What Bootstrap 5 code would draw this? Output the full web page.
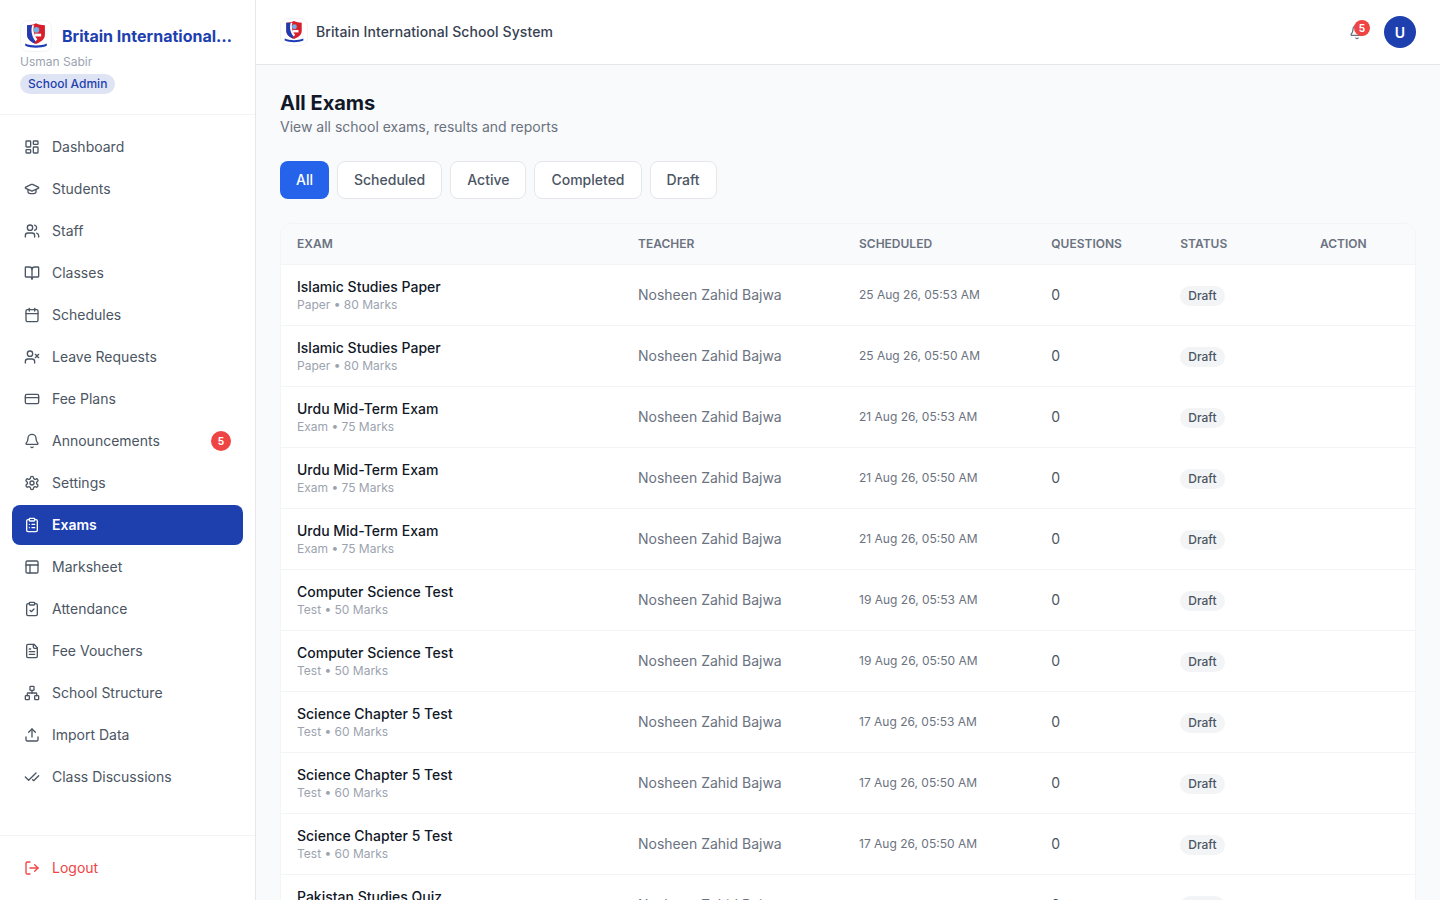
<!DOCTYPE html>
<html lang="en">
<head>
    <meta charset="UTF-8">
    <meta name="viewport" content="width=device-width, initial-scale=1.0">
    <title>All Exams</title>
    <link href="https://cdn.jsdelivr.net/npm/bootstrap@5.3.0/dist/css/bootstrap.min.css" rel="stylesheet">
    <style>
        html, body { height: 100%; }
        body { font-family: Inter, "Liberation Sans", sans-serif; background: #f9fafb; color: #111827; overflow: hidden; }
        .shell { height: 100vh; }
        .side { width: 256px; flex: 0 0 256px; background: #fff; border-right: 1px solid #e5e7eb; }
        .side-head { height: 115px; padding: 20px 20px 0; border-bottom: 1px solid #f3f4f6; }
        .logo-box { width: 32px; height: 32px; flex: 0 0 32px; border: 1px solid #f3f4f6; border-radius: 8px; background: #fff; }
        .logo-box svg { width: 100%; height: 100%; display: block; }
        .brand-name { font-size: 16px; font-weight: 700; color: #1e40af; line-height: 32px; min-width: 0; width: 171px; margin-left: 10px; }
        .user-name { font-size: 12px; line-height: 16px; color: #9ca3af; margin-top: 2px; }
        .role-chip { font-size: 12px; line-height: 16px; font-weight: 500; color: #1e40af; background: #dfe4f4; border-radius: 999px; padding: 2px 8px; margin-top: 4px; }
        .side-links { padding: 12px; gap: 2px; flex: 1 1 auto; }
        .side-link { height: 40px; padding: 0 12px; gap: 12px; border-radius: 8px; font-size: 14px; line-height: 20px; color: #4b5563; text-decoration: none; }
        .side-link svg, .side-out svg { width: 16px; height: 16px; flex: 0 0 16px; }
        .side-link.on { background: #1e40af; color: #fff; font-weight: 600; }
        .count-dot { width: 20px; height: 20px; margin-left: auto; background: #ef4444; color: #fff; border-radius: 50%; font-size: 10px; font-weight: 700; }
        .side-foot { height: 65px; flex: 0 0 65px; padding: 12px 12px 0; border-top: 1px solid #f3f4f6; }
        .side-out { height: 40px; padding: 0 12px; gap: 12px; font-size: 14px; line-height: 20px; color: #ef4444; text-decoration: none; }
        .top-bar { height: 65px; flex: 0 0 65px; background: #fff; border-bottom: 1px solid #e5e7eb; padding: 0 24px; }
        .top-logo { width: 28px; height: 28px; flex: 0 0 28px; border: 1px solid #f3f4f6; border-radius: 8px; background: #fff; }
        .top-logo svg { width: 100%; height: 100%; display: block; }
        .top-name { font-size: 14px; line-height: 20px; font-weight: 500; letter-spacing: .09px; color: #374151; }
        .bell-wrap { width: 16px; height: 16px; color: #6b7280; margin-right: 19px; }
        .bell-wrap svg { width: 16px; height: 16px; display: block; }
        .bell-count { position: absolute; top: -4px; right: -5px; width: 16px; height: 16px; border-radius: 50%; background: #ef4444; color: #fff; font-size: 10px; font-weight: 700; }
        .avatar-dot { width: 32px; height: 32px; background: #1e40af; color: #fff; border-radius: 50%; font-size: 14px; font-weight: 600; }
        .page-wrap { padding: 24px 24px 0; overflow: hidden; }
        .page-title { font-size: 20px; line-height: 28px; font-weight: 700; color: #111827; margin: 0; }
        .page-sub { font-size: 14px; line-height: 20px; color: #6b7280; margin: 0 0 24px; }
        .tab-btn { height: 38px; padding: 0 16px; font-size: 14px; line-height: 20px; font-weight: 500; color: #4b5563; background: #fff; border: 1px solid #e5e7eb; border-radius: 8px; }
        .tab-btn.on { background: #2563eb; border: 0; color: #fff; }
        .tab-row { margin-bottom: 24px; gap: 8px; }
        .exam-card { background: #fff; border: 1px solid #f3f4f6; border-radius: 12px; overflow: hidden; }
        .exam-table { table-layout: fixed; width: 1134px; margin: 0; }
        .exam-table th { height: 40px; padding: 0 16px; background: #f9fafb; font-size: 12px; line-height: 16px; font-weight: 600; color: #6b7280; text-transform: uppercase; border-bottom: 1px solid #f3f4f6; vertical-align: middle; }
        .exam-table td { height: 61px; padding: 0 16px; border-bottom: 1px solid #f3f4f6; vertical-align: middle; font-size: 14px; line-height: 20px; color: #4b5563; }
        .exam-table td.td-status { line-height: 21px; }
        .exam-name { font-size: 14px; line-height: 20px; font-weight: 450; color: #111827; }
        .exam-meta { font-size: 12px; line-height: 16px; color: #9ca3af; }
        .td-teacher { color: #6b7280 !important; }
        .td-date { font-size: 12px !important; color: #6b7280 !important; }
        .draft-chip { display: inline-block; font-size: 12px; line-height: 16px; font-weight: 500; padding: 2px 8px; border-radius: 999px; background: #f3f4f6; color: #4b5563; }
    </style>
</head>
<body>
<svg width="0" height="0" class="position-absolute">
    <symbol id="schoolLogo" viewBox="0 0 32 32">
        <path d="M6.500 4.500C10 4.500 13 4 16 2.500c3 1.500 6 2 9.500 2v10c0 5-4 8-9.500 10-5.500-2-9.500-5-9.500-10z" fill="#d81e2a"/>
        <path d="M6.500 4.500h5.500c-1.500 4.500-1 10.500 3.500 16l-1 3.500C10 22 6.500 19 6.500 14.500z" fill="#1e3cb4"/>
        <path d="M12 4.500h2c-1.500 4.500-.5 10.500 3.500 15l-2 2c-4.500-5.500-5-12-3.500-17z" fill="#fff"/>
        <circle cx="16.500" cy="9.500" r="3" fill="#6fb1e6"/>
        <rect x="14.500" y="13.500" width="7" height="3" fill="#fff"/>
        <path d="M4.500 24c3.500 1.500 7 2 11.500 2s8-.5 11.500-2v2.500c-3.500 1.500-7 2-11.500 2s-8-.5-11.500-2z" fill="#1e3cb4"/>
    </symbol>
</svg>

<div class="d-flex shell">
    <aside class="side d-flex flex-column">
        <div class="side-head">
            <div class="d-flex align-items-center">
                <div class="logo-box"><svg><use href="#schoolLogo"/></svg></div>
                <div class="brand-name text-truncate">Britain International School System</div>
            </div>
            <div class="user-name">Usman Sabir</div>
            <span class="role-chip d-inline-block">School Admin</span>
        </div>
        <nav class="side-links d-flex flex-column" id="sideLinks"></nav>
        <div class="side-foot">
            <a class="side-out d-flex align-items-center" href="#">
                <svg viewBox="0 0 24 24" fill="none" stroke="currentColor" stroke-width="2" stroke-linecap="round" stroke-linejoin="round"><path d="M9 21H5a2 2 0 0 1-2-2V5a2 2 0 0 1 2-2h4"/><path d="m16 17 5-5-5-5"/><path d="M21 12H9"/></svg>
                Logout
            </a>
        </div>
    </aside>

    <div class="flex-grow-1 d-flex flex-column" style="min-width:0">
        <header class="top-bar d-flex align-items-center">
            <div class="top-logo"><svg><use href="#schoolLogo"/></svg></div>
            <span class="top-name ms-2">Britain International School System</span>
            <div class="ms-auto d-flex align-items-center">
                <div class="bell-wrap position-relative">
                    <svg viewBox="0 0 24 24" fill="none" stroke="currentColor" stroke-width="2" stroke-linecap="round" stroke-linejoin="round"><path d="M10.268 21a2 2 0 0 0 3.464 0"/><path d="M3.262 15.326A1 1 0 0 0 4 17h16a1 1 0 0 0 .74-1.673C19.41 13.956 18 12.499 18 8A6 6 0 0 0 6 8c0 4.499-1.411 5.956-2.738 7.326"/></svg>
                    <span class="bell-count d-flex align-items-center justify-content-center">5</span>
                </div>
                <div class="avatar-dot d-flex align-items-center justify-content-center">U</div>
            </div>
        </header>

        <main class="page-wrap flex-grow-1">
            <h1 class="page-title">All Exams</h1>
            <p class="page-sub">View all school exams, results and reports</p>
            <div class="d-flex tab-row">
                <button class="tab-btn on" type="button">All</button>
                <button class="tab-btn" type="button">Scheduled</button>
                <button class="tab-btn" type="button">Active</button>
                <button class="tab-btn" type="button">Completed</button>
                <button class="tab-btn" type="button">Draft</button>
            </div>
            <div class="exam-card">
                <table class="table exam-table">
                    <colgroup>
                        <col style="width:341px"><col style="width:221px"><col style="width:192.300px"><col style="width:129px"><col style="width:139.700px"><col style="width:111px">
                    </colgroup>
                    <thead>
                    <tr><th>Exam</th><th>Teacher</th><th>Scheduled</th><th>Questions</th><th>Status</th><th>Action</th></tr>
                    </thead>
                    <tbody id="examRows"></tbody>
                </table>
            </div>
        </main>
    </div>
</div>

<script>
    const icons = {
        dashboard: '<rect width="7" height="9" x="3" y="3" rx="1"/><rect width="7" height="5" x="14" y="3" rx="1"/><rect width="7" height="9" x="14" y="12" rx="1"/><rect width="7" height="5" x="3" y="16" rx="1"/>',
        students: '<path d="M21.42 10.922a1 1 0 0 0-.019-1.838L12.83 5.18a2 2 0 0 0-1.66 0L2.6 9.08a1 1 0 0 0 0 1.832l8.57 3.908a2 2 0 0 0 1.66 0z"/><path d="M6 12.5V16a6 3 0 0 0 12 0v-3.5"/>',
        staff: '<path d="M16 21v-2a4 4 0 0 0-4-4H6a4 4 0 0 0-4 4v2"/><circle cx="9" cy="7" r="4"/><path d="M22 21v-2a4 4 0 0 0-3-3.87"/><path d="M16 3.13a4 4 0 0 1 0 7.75"/>',
        classes: '<path d="M12 7v14"/><path d="M3 18a1 1 0 0 1-1-1V4a1 1 0 0 1 1-1h5a4 4 0 0 1 4 4 4 4 0 0 1 4-4h5a1 1 0 0 1 1 1v13a1 1 0 0 1-1 1h-6a3 3 0 0 0-3 3 3 3 0 0 0-3-3z"/>',
        schedules: '<path d="M8 2v4"/><path d="M16 2v4"/><rect width="18" height="18" x="3" y="4" rx="2"/><path d="M3 10h18"/>',
        leave: '<path d="M16 21v-2a4 4 0 0 0-4-4H6a4 4 0 0 0-4 4v2"/><circle cx="9" cy="7" r="4"/><path d="m17 8 5 5"/><path d="m22 8-5 5"/>',
        plans: '<rect width="20" height="14" x="2" y="5" rx="2"/><path d="M2 10h20"/>',
        bell: '<path d="M10.268 21a2 2 0 0 0 3.464 0"/><path d="M3.262 15.326A1 1 0 0 0 4 17h16a1 1 0 0 0 .74-1.673C19.41 13.956 18 12.499 18 8A6 6 0 0 0 6 8c0 4.499-1.411 5.956-2.738 7.326"/>',
        settings: '<path d="M12.22 2h-.44a2 2 0 0 0-2 2v.18a2 2 0 0 1-1 1.73l-.43.25a2 2 0 0 1-2 0l-.15-.08a2 2 0 0 0-2.73.73l-.22.38a2 2 0 0 0 .73 2.73l.15.1a2 2 0 0 1 1 1.72v.51a2 2 0 0 1-1 1.74l-.15.09a2 2 0 0 0-.73 2.73l.22.38a2 2 0 0 0 2.73.73l.15-.08a2 2 0 0 1 2 0l.43.25a2 2 0 0 1 1 1.73V20a2 2 0 0 0 2 2h.44a2 2 0 0 0 2-2v-.18a2 2 0 0 1 1-1.73l.43-.25a2 2 0 0 1 2 0l.15.08a2 2 0 0 0 2.73-.73l.22-.39a2 2 0 0 0-.73-2.73l-.15-.08a2 2 0 0 1-1-1.74v-.5a2 2 0 0 1 1-1.74l.15-.09a2 2 0 0 0 .73-2.73l-.22-.38a2 2 0 0 0-2.73-.73l-.15.08a2 2 0 0 1-2 0l-.43-.25a2 2 0 0 1-1-1.73V4a2 2 0 0 0-2-2z"/><circle cx="12" cy="12" r="3"/>',
        exams: '<rect width="8" height="4" x="8" y="2" rx="1"/><path d="M16 4h2a2 2 0 0 1 2 2v14a2 2 0 0 1-2 2H6a2 2 0 0 1-2-2V6a2 2 0 0 1 2-2h2"/><path d="M12 11h4"/><path d="M12 16h4"/><path d="M8 11h.01"/><path d="M8 16h.01"/>',
        marksheet: '<rect width="18" height="18" x="3" y="3" rx="2"/><path d="M3 9h18"/><path d="M9 21V9"/>',
        attendance: '<rect width="8" height="4" x="8" y="2" rx="1"/><path d="M16 4h2a2 2 0 0 1 2 2v14a2 2 0 0 1-2 2H6a2 2 0 0 1-2-2V6a2 2 0 0 1 2-2h2"/><path d="m9 14 2 2 4-4"/>',
        vouchers: '<path d="M15 2H6a2 2 0 0 0-2 2v16a2 2 0 0 0 2 2h12a2 2 0 0 0 2-2V7Z"/><path d="M14 2v4a2 2 0 0 0 2 2h4"/><path d="M10 9H8"/><path d="M16 13H8"/><path d="M16 17H8"/>',
        structure: '<rect x="16" y="16" width="6" height="6" rx="1"/><rect x="2" y="16" width="6" height="6" rx="1"/><rect x="9" y="2" width="6" height="6" rx="1"/><path d="M5 16v-3a1 1 0 0 1 1-1h12a1 1 0 0 1 1 1v3"/><path d="M12 12V8"/>',
        upload: '<path d="M21 15v4a2 2 0 0 1-2 2H5a2 2 0 0 1-2-2v-4"/><path d="m17 8-5-5-5 5"/><path d="M12 3v12"/>',
        discuss: '<path d="M18 6 7 17l-5-5"/><path d="m22 10-7.500 7.500L13 16"/>'
    };

    const links = [
        ["Dashboard", "dashboard"], ["Students", "students"], ["Staff", "staff"], ["Classes", "classes"],
        ["Schedules", "schedules"], ["Leave Requests", "leave"], ["Fee Plans", "plans"], ["Announcements", "bell", 5],
        ["Settings", "settings"], ["Exams", "exams"], ["Marksheet", "marksheet"], ["Attendance", "attendance"],
        ["Fee Vouchers", "vouchers"], ["School Structure", "structure"], ["Import Data", "upload"], ["Class Discussions", "discuss"]
    ];

    const exams = [
        ["Islamic Studies Paper", "Paper • 80 Marks", "25 Aug 26, 05:53 AM"],
        ["Islamic Studies Paper", "Paper • 80 Marks", "25 Aug 26, 05:50 AM"],
        ["Urdu Mid-Term Exam", "Exam • 75 Marks", "21 Aug 26, 05:53 AM"],
        ["Urdu Mid-Term Exam", "Exam • 75 Marks", "21 Aug 26, 05:50 AM"],
        ["Urdu Mid-Term Exam", "Exam • 75 Marks", "21 Aug 26, 05:50 AM"],
        ["Computer Science Test", "Test • 50 Marks", "19 Aug 26, 05:53 AM"],
        ["Computer Science Test", "Test • 50 Marks", "19 Aug 26, 05:50 AM"],
        ["Science Chapter 5 Test", "Test • 60 Marks", "17 Aug 26, 05:53 AM"],
        ["Science Chapter 5 Test", "Test • 60 Marks", "17 Aug 26, 05:50 AM"],
        ["Science Chapter 5 Test", "Test • 60 Marks", "17 Aug 26, 05:50 AM"],
        ["Pakistan Studies Quiz", "Quiz • 25 Marks", "15 Aug 26, 05:53 AM"]
    ];

    document.getElementById("sideLinks").innerHTML = links.map(([label, icon, count]) => `
        <a class="side-link d-flex align-items-center ${label === "Exams" ? "on" : ""}" href="#">
            <svg viewBox="0 0 24 24" fill="none" stroke="currentColor" stroke-width="2" stroke-linecap="round" stroke-linejoin="round">${icons[icon]}</svg>
            ${label}
            ${count ? `<span class="count-dot d-flex align-items-center justify-content-center">${count}</span>` : ""}
        </a>`).join("");

    document.getElementById("examRows").innerHTML = exams.map(([name, meta, date]) => `
        <tr>
            <td><div class="exam-name">${name}</div><div class="exam-meta">${meta}</div></td>
            <td class="td-teacher">Nosheen Zahid Bajwa</td>
            <td class="td-date">${date}</td>
            <td>0</td>
            <td class="td-status"><span class="draft-chip">Draft</span></td>
            <td></td>
        </tr>`).join("");
</script>
<script src="https://cdn.jsdelivr.net/npm/bootstrap@5.3.0/dist/js/bootstrap.bundle.min.js"></script>
</body>
</html>
